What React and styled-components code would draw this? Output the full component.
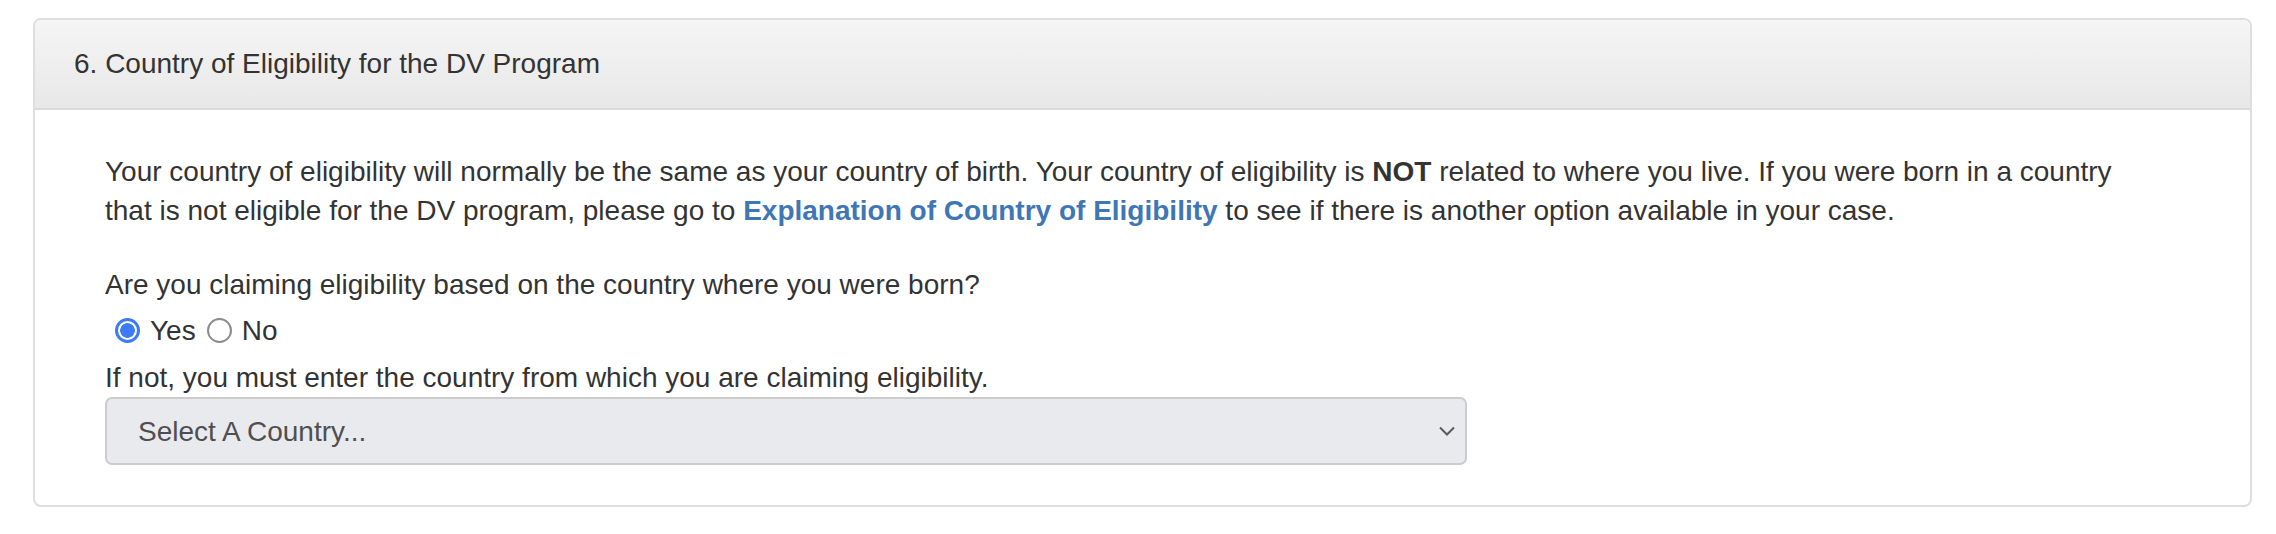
import React from "react";
import styled, { createGlobalStyle } from "styled-components";

const GlobalStyle = createGlobalStyle`
  html, body {
    margin: 0;
    padding: 0;
    background: #ffffff;
  }
  body {
    font-family: "Liberation Sans", Arial, Helvetica, sans-serif;
    color: #333333;
  }
`;

const Page = styled.div`
  padding: 18px 24px 24px 33px;
`;

const Panel = styled.section`
  border: 2px solid #dedede;
  border-radius: 8px;
  background: #ffffff;
  overflow: hidden;
`;

const PanelHeading = styled.header`
  background: linear-gradient(to bottom, #f5f5f5 0%, #e8e8e8 100%);
  border-bottom: 2px solid #dadada;
  padding: 24px 40px 24px 39px;
`;

const PanelTitle = styled.h3`
  margin: 0;
  font-size: 28px;
  line-height: 40px;
  font-weight: 400;
  color: #333333;
`;

const PanelBody = styled.div`
  padding: 42px 100px 40px 70px;
  font-size: 28px;
  line-height: 39px;
`;

const Intro = styled.p`
  margin: 0 0 35px 0;
`;

const Strong = styled.strong`
  font-weight: 700;
`;

const Link = styled.a`
  color: #3f77b6;
  font-weight: 700;
  text-decoration: none;
`;

const Question = styled.p`
  margin: 0 0 6px 0;
`;

const RadioRow = styled.div`
  display: flex;
  align-items: center;
  height: 40px;
  padding-left: 10px;
  margin-bottom: 8px;
`;

const RadioLabel = styled.label`
  display: inline-flex;
  align-items: center;
  gap: 10px;
  margin-right: 11px;
  cursor: pointer;
`;

const RadioInput = styled.input.attrs({ type: "radio" })`
  appearance: none;
  -webkit-appearance: none;
  margin: 0;
  width: 25px;
  height: 25px;
  box-sizing: border-box;
  border-radius: 50%;
  border: 2px solid #8c8c8c;
  background: #ffffff;
  &:checked {
    border: 3px solid #3b7cf4;
    background: radial-gradient(circle, #3b7cf4 0 7px, #ffffff 7.6px);
  }
`;

const Hint = styled.p`
  margin: 0;
`;

const SelectWrap = styled.div`
  position: relative;
  width: 1362px;
`;

const Select = styled.select`
  appearance: none;
  -webkit-appearance: none;
  display: block;
  width: 100%;
  height: 68px;
  box-sizing: border-box;
  padding: 0 60px 0 31px;
  font-family: "Liberation Sans", Arial, Helvetica, sans-serif;
  font-size: 28px;
  color: #4f4f4f;
  background: #e9eaee;
  border: 2px solid #cccccc;
  border-radius: 7px;
  outline: none;
  opacity: 1;
`;

const Chevron = styled.svg`
  position: absolute;
  right: 11px;
  top: 50%;
  transform: translateY(-50%);
  pointer-events: none;
`;

export default function App() {
  const [born, setBorn] = React.useState("yes");
  return (
    <>
      <GlobalStyle />
      <Page>
        <Panel>
          <PanelHeading>
            <PanelTitle>6. Country of Eligibility for the DV Program</PanelTitle>
          </PanelHeading>
          <PanelBody>
            <Intro>
              Your country of eligibility will normally be the same as your country of birth. Your
              country of eligibility is <Strong>NOT</Strong> related to where you live. If you were
              born in a country that is not eligible for the DV program, please go to{" "}
              <Link href="#">Explanation of Country of Eligibility</Link> to see if there is another
              option available in your case.
            </Intro>
            <Question>Are you claiming eligibility based on the country where you were born?</Question>
            <RadioRow>
              <RadioLabel>
                <RadioInput
                  name="born"
                  checked={born === "yes"}
                  onChange={() => setBorn("yes")}
                />
                Yes
              </RadioLabel>
              <RadioLabel>
                <RadioInput
                  name="born"
                  checked={born === "no"}
                  onChange={() => setBorn("no")}
                />
                No
              </RadioLabel>
            </RadioRow>
            <Hint>If not, you must enter the country from which you are claiming eligibility.</Hint>
            <SelectWrap>
              <Select defaultValue="">
                <option value="">Select A Country...</option>
              </Select>
              <Chevron width="18" height="11" viewBox="0 0 18 11" aria-hidden="true">
                <path d="M2 2 L9 9 L16 2" fill="none" stroke="#5a5a5a" strokeWidth="2" />
              </Chevron>
            </SelectWrap>
          </PanelBody>
        </Panel>
      </Page>
    </>
  );
}
